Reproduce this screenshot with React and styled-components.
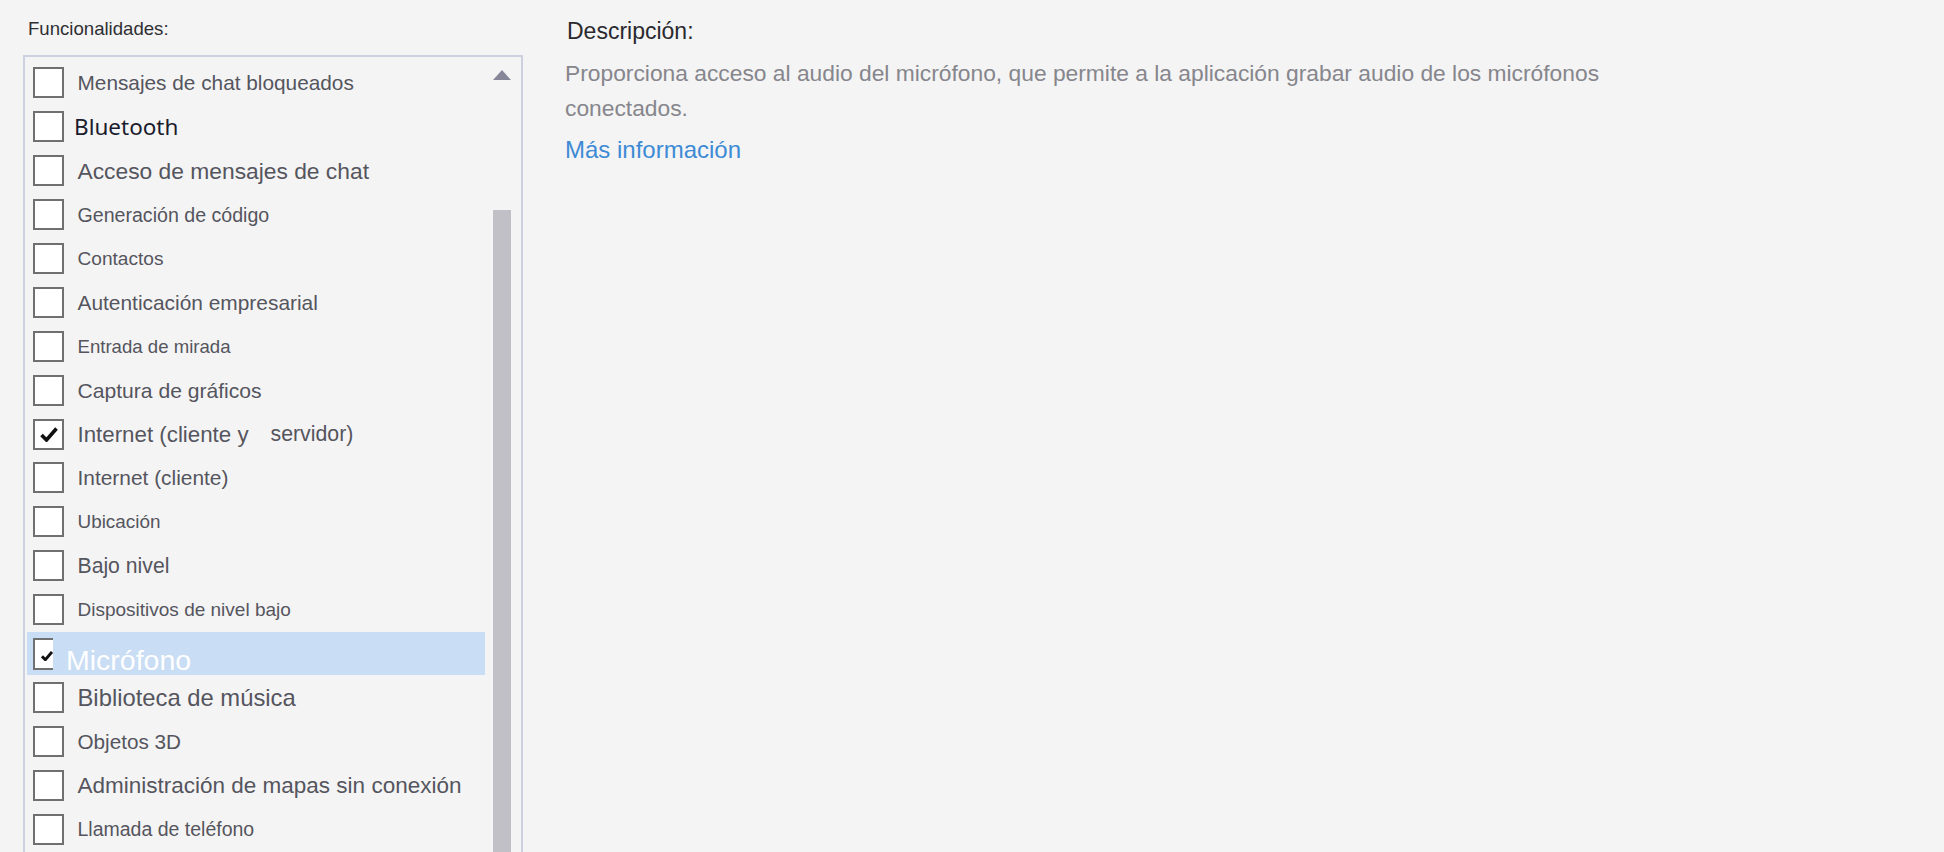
import React from 'react';
import styled, { createGlobalStyle } from 'styled-components';

const GlobalStyle = createGlobalStyle`
  html, body {
    margin: 0;
    padding: 0;
    background: #f4f4f4;
    overflow: hidden;
  }
  body {
    font-family: "Liberation Sans", Arial, sans-serif;
  }
`;

const Page = styled.div`
  display: flex;
  align-items: flex-start;
  height: 852px;
  padding-left: 23px;
  box-sizing: border-box;
`;

const FeaturesColumn = styled.div`
  width: 500px;
  display: flex;
  flex-direction: column;
  padding-top: 18px;
`;

const SectionTitle = styled.div`
  font-size: 18.6px;
  line-height: 21px;
  color: #2f2f33;
  padding-left: 5px;
  margin-bottom: 16px;
`;

const ListBox = styled.div`
  display: flex;
  height: 820px;
  border: 2px solid #cdd0df;
  box-sizing: border-box;
`;

const Rows = styled.div`
  flex: 1;
  display: flex;
  flex-direction: column;
  padding: 4px 8px 0 2px;
  overflow: hidden;
`;

const Row = styled.div`
  display: flex;
  align-items: center;
  flex: 0 0 43.9px;
  height: 43.9px;
  padding-left: 6px;
  box-sizing: border-box;
  background: ${(p) => (p.$selected ? '#c9ddf4' : 'transparent')};
`;

const Box = styled.div`
  flex: 0 0 auto;
  width: 31px;
  height: 31px;
  box-sizing: border-box;
  border: 2px solid #707070;
  background: #ffffff;
  display: flex;
  align-items: center;
  justify-content: center;
  margin-right: ${(p) => p.$gap}px;
`;

const ClippedBox = styled.div`
  flex: 0 0 auto;
  align-self: flex-start;
  margin-top: 6px;
  width: 20px;
  height: 32px;
  box-sizing: border-box;
  border: 2px solid #707070;
  border-right: none;
  background: #ffffff;
  display: flex;
  align-items: center;
  justify-content: flex-end;
  padding-top: 5px;
  margin-right: 13px;
`;

const Label = styled.span`
  font-size: ${(p) => p.$size}px;
  line-height: 1.15;
  color: #55555e;
  white-space: nowrap;
  padding-top: 1px;
`;

const SegoeLabel = styled(Label)`
  font-family: "Noto Sans", "Open Sans", sans-serif;
  color: #1b1b2e;
`;

const Tail = styled(Label)`
  margin-left: 22px;
`;

const SelectedLabel = styled.span`
  align-self: flex-end;
  font-size: ${(p) => p.$size}px;
  line-height: 28px;
  color: #ffffff;
  white-space: nowrap;
  padding-bottom: 1px;
`;

const ScrollTrack = styled.div`
  width: 18px;
  margin-right: 10px;
  display: flex;
  flex-direction: column;
  align-items: center;
  padding-top: 13px;
`;

const ArrowUp = styled.div`
  width: 0;
  height: 0;
  border-left: 9px solid transparent;
  border-right: 9px solid transparent;
  border-bottom: 10px solid #858799;
`;

const Thumb = styled.div`
  width: 18px;
  flex: 1;
  margin-top: 130px;
  background: #c0c0c6;
`;

const DescriptionColumn = styled.div`
  margin-left: 42px;
  padding-top: 18px;
  display: flex;
  flex-direction: column;
`;

const DescTitle = styled.div`
  font-size: 23px;
  line-height: 27px;
  color: #2a2a2e;
  padding-left: 2px;
`;

const DescText = styled.p`
  margin: 11px 0 0;
  width: 1090px;
  font-size: 22.8px;
  line-height: 35px;
  color: #86868c;
`;

const MoreLink = styled.a`
  margin-top: 9px;
  font-size: 24px;
  line-height: 30px;
  color: #3d8bd5;
  text-decoration: none;
  cursor: pointer;
`;

const Check = ({ w = 18, h = 15, weight = 3.6 }) => (
  <svg width={w} height={h} viewBox="0 0 18 15">
    <path d="M1.5 8 L6.5 13 L16.5 1.5" fill="none" stroke="#111" strokeWidth={weight} />
  </svg>
);

const features = [
  { label: 'Mensajes de chat bloqueados', size: 20.8 },
  { label: 'Bluetooth', size: 22.5, segoe: true, gap: 10 },
  { label: 'Acceso de mensajes de chat', size: 22.8 },
  { label: 'Generación de código', size: 19.6 },
  { label: 'Contactos', size: 19.1 },
  { label: 'Autenticación empresarial', size: 20.9 },
  { label: 'Entrada de mirada', size: 18.6 },
  { label: 'Captura de gráficos', size: 21.1 },
  { label: 'Internet (cliente y', tail: 'servidor)', size: 22.3, tailSize: 21.3, checked: true },
  { label: 'Internet (cliente)', size: 20.9 },
  { label: 'Ubicación', size: 18.9 },
  { label: 'Bajo nivel', size: 21.2 },
  { label: 'Dispositivos de nivel bajo', size: 19 },
  { label: 'Micrófono', size: 28.5, checked: true, selected: true },
  { label: 'Biblioteca de música', size: 23.8 },
  { label: 'Objetos 3D', size: 20.7 },
  { label: 'Administración de mapas sin conexión', size: 22.5 },
  { label: 'Llamada de teléfono', size: 19.5 },
];

const FeatureRow = ({ item }) => {
  if (item.selected) {
    return (
      <Row $selected>
        <ClippedBox>
          <Check w={12} h={10} weight={4.4} />
        </ClippedBox>
        <SelectedLabel $size={item.size}>{item.label}</SelectedLabel>
      </Row>
    );
  }
  const TextComp = item.segoe ? SegoeLabel : Label;
  return (
    <Row>
      <Box $gap={item.gap ?? 13.5}>{item.checked && <Check />}</Box>
      <TextComp $size={item.size}>{item.label}</TextComp>
      {item.tail && <Tail $size={item.tailSize}>{item.tail}</Tail>}
    </Row>
  );
};

const App = () => (
  <>
    <GlobalStyle />
    <Page>
      <FeaturesColumn>
        <SectionTitle>Funcionalidades:</SectionTitle>
        <ListBox>
          <Rows>
            {features.map((item) => (
              <FeatureRow key={item.label} item={item} />
            ))}
          </Rows>
          <ScrollTrack>
            <ArrowUp />
            <Thumb />
          </ScrollTrack>
        </ListBox>
      </FeaturesColumn>
      <DescriptionColumn>
        <DescTitle>Descripción:</DescTitle>
        <DescText>
          Proporciona acceso al audio del micrófono, que permite a la aplicación grabar audio de los
          micrófonos conectados.
        </DescText>
        <MoreLink>Más información</MoreLink>
      </DescriptionColumn>
    </Page>
  </>
);

export default App;
